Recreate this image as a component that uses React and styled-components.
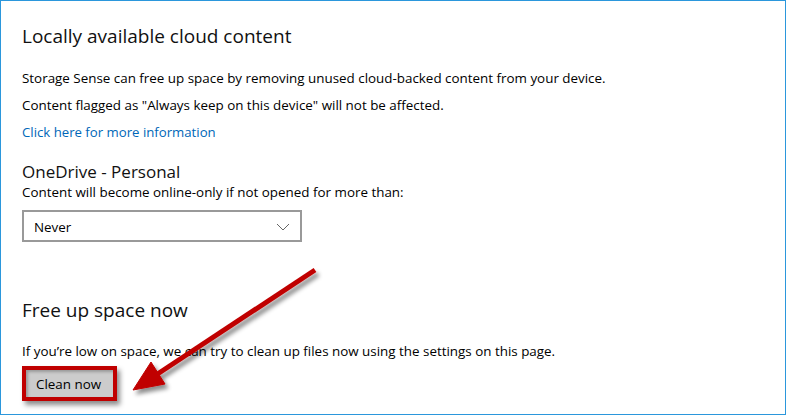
import React from 'react';
import styled, { createGlobalStyle } from 'styled-components';

const Global = createGlobalStyle`
  html, body {
    margin: 0;
    padding: 0;
    background: #fff;
  }
  body {
    font-family: "Open Sans", "Noto Sans", sans-serif;
    color: #000;
  }
`;

const Window = styled.div`
  position: relative;
  box-sizing: border-box;
  width: 786px;
  height: 415px;
  border: 1px solid #2b97dc;
  padding: 21px 0 0 21px;
  overflow: hidden;
  background: #fff;
`;

const Title = styled.h1`
  margin: ${p => p.$top || 0}px 0 0;
  font-size: 19px;
  line-height: 29px;
  font-weight: 400;
  color: #111;
`;

const SubTitle = styled.h2`
  margin: 15px 0 0;
  font-size: 17px;
  line-height: 22px;
  font-weight: 400;
  color: #111;
`;

const Text = styled.p`
  margin: ${p => p.$top || 0}px 0 0;
  font-size: 13.4px;
  line-height: ${p => p.$lh || 27}px;
`;

const Link = styled.a`
  display: block;
  font-size: 13.2px;
  line-height: 27px;
  color: #0067b8;
  text-decoration: none;
`;

const Select = styled.div`
  margin-top: 9px;
  box-sizing: border-box;
  width: 280px;
  height: 32px;
  border: 2px solid #999;
  display: flex;
  align-items: center;
  justify-content: space-between;
  padding: 1px 10px 0 10px;
  font-size: 13.4px;
`;

const Chevron = () => (
  <svg width="14" height="8" viewBox="0 0 14 8">
    <path d="M1 1 L7 7 L13 1" fill="none" stroke="#666" strokeWidth="1" />
  </svg>
);

const Highlight = styled.div`
  margin-top: 5px;
  box-sizing: border-box;
  width: 95px;
  height: 35px;
  border: 4px solid #c00000;
  box-shadow: 3px 4px 5px rgba(0, 0, 0, 0.45);
`;

const Button = styled.button`
  width: 100%;
  height: 100%;
  border: none;
  background: #cccccc;
  font-family: inherit;
  font-size: 13.4px;
  color: #000;
  text-align: left;
  padding: 0 0 0 10px;
  box-shadow: inset 2px 2px 3px rgba(0, 0, 0, 0.25);
`;

const Overlay = styled.svg`
  position: absolute;
  left: 0;
  top: 0;
  pointer-events: none;
`;

const Arrow = () => (
  <Overlay width="786" height="415" viewBox="0 0 786 415">
    <defs>
      <filter id="sh" x="-20%" y="-20%" width="140%" height="140%">
        <feDropShadow dx="3" dy="4" stdDeviation="2" floodColor="#000" floodOpacity="0.45" />
      </filter>
    </defs>
    <g filter="url(#sh)" fill="#c00000" stroke="#c00000">
      <line x1="314" y1="269" x2="155" y2="374" strokeWidth="5" />
      <polygon points="132,389 150,361 164,383" strokeWidth="1" />
    </g>
  </Overlay>
);

export default function App() {
  return (
    <>
      <Global />
      <Window>
        <Title>Locally available cloud content</Title>
        <Text $top={14}>Storage Sense can free up space by removing unused cloud-backed content from your device.</Text>
        <Text>Content flagged as "Always keep on this device" will not be affected.</Text>
        <Link href="#">Click here for more information</Link>
        <SubTitle>OneDrive - Personal</SubTitle>
        <Text $lh={18}>Content will become online-only if not opened for more than:</Text>
        <Select>
          <span>Never</span>
          <Chevron />
        </Select>
        <Title $top={54}>Free up space now</Title>
        <Text $top={16} $lh={20}>If you’re low on space, we can try to clean up files now using the settings on this page.</Text>
        <Highlight>
          <Button>Clean now</Button>
        </Highlight>
        <Arrow />
      </Window>
    </>
  );
}
